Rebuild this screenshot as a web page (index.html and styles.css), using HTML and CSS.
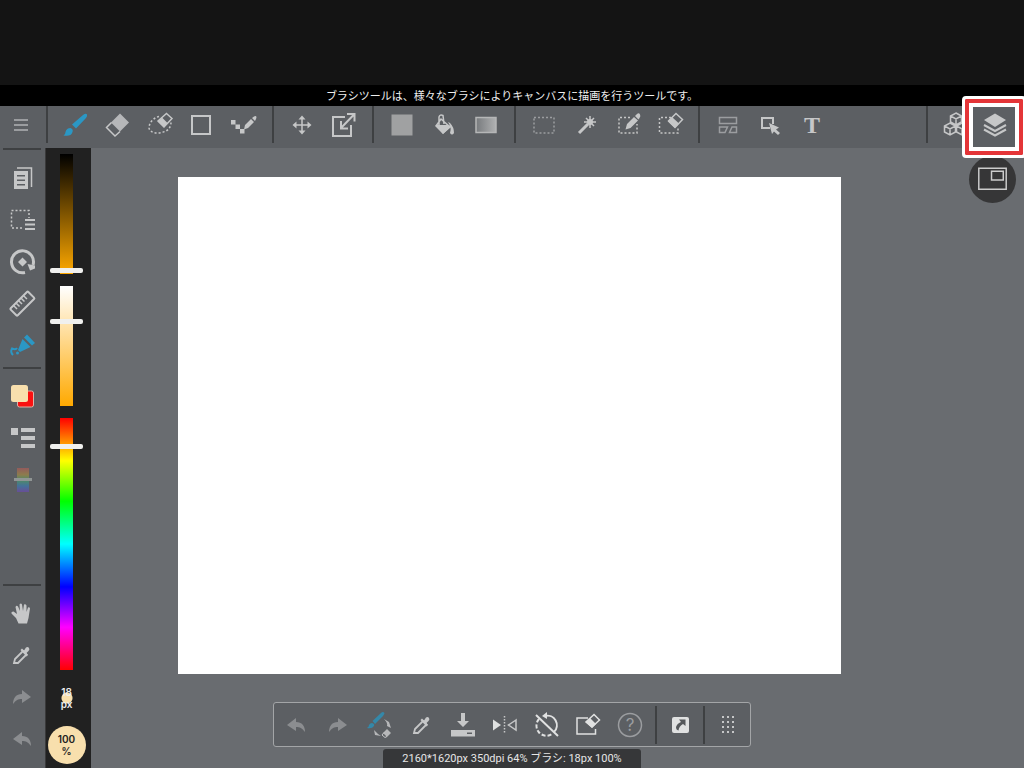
FILE: index.html
```html
<!DOCTYPE html>
<html lang="ja">
<head>
<meta charset="utf-8">
<meta name="viewport" content="width=device-width, initial-scale=1">
<title>ペイント</title>
<link rel="stylesheet" href="styles.css">
</head>
<body>
<svg class="defs" aria-hidden="true">
  <defs>
    <linearGradient id="grey" x1="0" x2="1"><stop offset="0" stop-color="#777a7d"/><stop offset="1" stop-color="#b0b1b2"/></linearGradient>
    <linearGradient id="spectrum" x1="0" x2="0" y1="0" y2="1"><stop offset="0" stop-color="#935b5c"/><stop offset=".28" stop-color="#8d7c4d"/><stop offset=".5" stop-color="#4f8b65"/><stop offset=".75" stop-color="#44719a"/><stop offset="1" stop-color="#684e96"/></linearGradient>
    <symbol id="undo" viewBox="-21 -21 42 42"><path fill="currentColor" d="M-9 0 0-7v4C6-3 9 1 9 7 6 3 4 2 0 2v4z"/></symbol>
    <symbol id="redo" viewBox="-21 -21 42 42"><path fill="currentColor" d="M9 0 0-7v4C-6-3-9 1-9 7-6 3-4 2 0 2v4z"/></symbol>
    <symbol id="dropper" viewBox="-21 -21 42 42"><path fill="none" stroke="currentColor" stroke-width="1.8" d="M-8 8l1-4L1-4l3.500 3.500-8.500 8.500z"/><path fill="currentColor" d="M-1.500-5 0-6.500 2-4.500 4-7.500Q6-8.500 7-7 8-5.500 6.500-4L4.500-2 6 0 4.500 1.500z"/></symbol>
  </defs>
</svg>
<div class="app">
  <div class="top-space"></div>
  <p class="notice">ブラシツールは、様々なブラシによりキャンバスに描画を行うツールです。</p>

  <header class="toolbar">
    <div class="menu">
      <button class="tool muted" aria-label="メニュー"><svg viewBox="-21 -21 42 42"><path class="line thick" d="M-7-5H7M-7 0H7M-7 5H7"/></svg></button>
    </div>
    <div class="group">
      <button class="tool active" aria-label="ブラシ"><svg viewBox="-21 -21 42 42"><path class="fill" d="M7-10Q10-12 11-10.500 11.500-9 10-7L0 3.500-4-.500zM-5.500 3Q-2.500 4-3.500 7-5 12-12.500 10.500-10.500 9.500-10.500 7-9.500 3-5.500 3z"/></svg></button>
      <button class="tool" aria-label="消しゴム"><svg viewBox="-21 -21 42 42"><path class="fill dim" d="M2-11.500 11-2.500 2 6.500-7-2.500z"/><path class="line" d="M-6.500-2.500-11.500 2.500-3 11 2 6.500"/></svg></button>
      <button class="tool" aria-label="投げ縄消しゴム"><svg viewBox="-21 -21 42 42"><path class="line dash" d="M-1-8.500C-7-7-11-2-11 3-10 9 0 9 6 6 10 4 11 0 11-3"/><path class="line" d="M6.500-11.500 12-6.500 4 2-2-4z"/><path class="fill" d="M2-7.500 7.500-2 4 2.500-2-3.500z"/></svg></button>
      <button class="tool" aria-label="図形"><svg viewBox="-21 -21 42 42"><rect class="line thick" x="-10" y="-9" width="18" height="18"/></svg></button>
      <button class="tool" aria-label="ドットツール"><svg viewBox="-21 -21 42 42"><path class="fill" d="M-13-5h4.500v4.500h-4.500zM-8.500-.500h4.500v4.500h-4.500zM-4 4h4.500v4.500h-4.500zM0 4.500L1 0 7-6 10-3 4 3zM8-7L10-8.500Q12-9.500 12.500-8 12.500-6.500 11-4z"/></svg></button>
    </div>
    <div class="group">
      <button class="tool" aria-label="移動"><svg viewBox="-21 -21 42 42"><path class="line" d="M0-7V7M-7 0H7"/><path class="fill" d="M0-9.500 3.500-5.500h-7zM0 9.500 3.500 5.500h-7zM-9.500 0-5.500-3.500v7zM9.500 0 5.500-3.500v7z"/></svg></button>
      <button class="tool" aria-label="変形"><svg viewBox="-21 -21 42 42"><path class="line thick" d="M1-8H-11V11H7V0M-3 3 10-10.500M3-11h7.500v7.500M-3-4v7.500h7"/></svg></button>
    </div>
    <div class="group">
      <button class="tool" aria-label="塗りつぶし図形"><svg viewBox="-21 -21 42 42"><rect fill="#a0a1a2" x="-10.500" y="-10.500" width="21" height="21"/></svg></button>
      <button class="tool" aria-label="バケツ"><svg viewBox="-21 -21 42 42"><path class="line" d="M-5 0V-8Q-4-11-1-9.500L0-1M-3-6 6 2-1 8-8 1z"/><path class="fill" d="M-8.500 0 5 0 6.500 2-1 9zM6-2Q10 2 10 8 8 11 6 8 8 3 4-3z"/></svg></button>
      <button class="tool" aria-label="グラデーション"><svg viewBox="-21 -21 42 42"><rect x="-10" y="-7.500" width="20" height="15" fill="url(#grey)" stroke="#b5b6b7" stroke-width="1.500"/></svg></button>
    </div>
    <div class="group">
      <button class="tool muted" aria-label="選択"><svg viewBox="-21 -21 42 42"><rect class="line dash" x="-10" y="-7.500" width="20" height="15.500"/></svg></button>
      <button class="tool" aria-label="自動選択"><svg viewBox="-21 -21 42 42"><path class="line heavy" d="M-7 8 2-1"/><path class="line" d="M4-9V3M-2-3H10M0-7 8 1M8-7 0 1"/><circle class="fill" cx="4" cy="-3" r="3"/></svg></button>
      <button class="tool" aria-label="選択ペン"><svg viewBox="-21 -21 42 42"><path class="line dash" d="M2-7.500H-9V8H9V-1"/><path class="fill" d="M-2.500 4.500-1-1 6-8 10-4.500 2.500 3zM7-9l2-2Q11-12.500 12-10.500 13-9 11.500-7L10.500-5.500z"/></svg></button>
      <button class="tool" aria-label="選択消し"><svg viewBox="-21 -21 42 42"><path class="line dash" d="M1-7.500H-10.500V8H8V2"/><path class="line" d="M6-11.500 12.500-5.500 5 2.500-1.500-4z"/><path class="fill" d="M2-8 9-1.500 5 3-2-3.500z"/></svg></button>
    </div>
    <div class="group">
      <button class="tool muted" aria-label="コマ割り"><svg viewBox="-21 -21 42 42"><path class="line" d="M-8.500-7.500H8.500V-1.500H-8.500zM-8.500 2H-.500L-3 7.500H-8.500zM4 2H8.500V7.500H1.500z"/></svg></button>
      <button class="tool" aria-label="操作"><svg viewBox="-21 -21 42 42"><path class="line thick" d="M0 3H-8V-7H3V-1"/><path class="fill" d="M-1-2 9 2.500 6 4.500 10 8 8 10 4 6.500 2 9z"/></svg></button>
      <button class="tool" aria-label="テキスト"><svg viewBox="-21 -21 42 42"><text class="letter" x="0" y="8" text-anchor="middle">T</text></svg></button>
    </div>
    <div class="group end">
      <button class="tool" aria-label="素材"><svg viewBox="-21 -21 42 42"><path class="line" d="M3-12 8.500-9V-3L3 0-2.500-3V-9zM-2.500-9 3-6 8.500-9M3-6V0M-3-2 2.500 1V7L-3 10-8.500 7V1zM-8.500 1-3 4 2.500 1M-3 4v6M9-2l5.500 3V7L9 10 3.500 7V1zM3.500 1 9 4l5.500-3M9 4v6"/></svg></button>
      <button class="tool picked" aria-label="レイヤー"><svg viewBox="-21 -21 42 42"><path class="fill" d="M0-11.500 11-5 0 2-11-5z"/><path class="line thick" d="M-11 0 0 6 11 0M-11 4.500 0 10.500 11 4.500"/></svg><span class="marker"></span></button>
    </div>
  </header>

  <div class="workspace">
    <nav class="sidebar">
      <div class="side-group first">
        <button class="tool" aria-label="ページ"><svg viewBox="-21 -21 42 42"><path class="fill" fill-rule="evenodd" d="M-8-7H6V11H-8zM-5-3V-1.500H3V-3zM-5 1.500V3H3V1.500zM-5 6V7.500H3V6z"/><path class="line" d="M-5-10H9.500V9"/></svg></button>
        <button class="tool" aria-label="選択メニュー"><svg viewBox="-21 -21 42 42"><path class="line dash" d="M0 8H-10.500V-9.500H7V-2"/><path class="line thick" d="M3 0H13M3 4.500H13M3 9H13"/></svg></button>
        <button class="tool" aria-label="回転"><svg viewBox="-21 -21 42 42"><path class="line heavy" d="M3 10.500A11 11 0 1 1 11 3"/><path class="fill" d="M5.500 2 13 3.500V6.500L8 8.500zM.500-4.500 5 0 .500 4.500-4 0z"/></svg></button>
        <button class="tool" aria-label="定規"><svg viewBox="-21 -21 42 42"><g transform="rotate(-45)"><rect class="line thick" x="-12" y="-5" width="25" height="10" rx="1"/><path class="line" d="M-7-5V0M-3.500-5V0M0-5V0M3.500-5V0M7-5V0"/></g></svg></button>
        <button class="tool active" aria-label="補正"><svg viewBox="-21 -21 42 42"><path class="fill" d="M2-8.500 5-11.500 13-3 10-.500zM.500-7 8.500 1-2 6-4 4z"/><path class="line thick" d="M-5 2Q-6 4-10 2.500-12 6-9 9"/><circle class="fill" cx="-4.500" cy="7" r="1.500"/></svg></button>
      </div>
      <div class="side-group">
        <button class="tool" aria-label="カラー"><svg viewBox="-21 -21 42 42"><rect x="-4.500" y="-5" width="16" height="16" rx="2" fill="#fa1010" stroke="#ddb3a8"/><rect x="-11" y="-11" width="17" height="17" rx="2.500" fill="#f8dfad"/></svg></button>
        <button class="tool" aria-label="リスト"><svg viewBox="-21 -21 42 42"><path class="fill" d="M-11-10h7v7h-7zM-1-10H13v4H-1zM-1-2H13v4H-1zM-1 6H13v4H-1z"/></svg></button>
        <button class="tool" aria-label="カラーバー"><svg viewBox="-21 -21 42 42"><rect x="-5" y="-12" width="12" height="24" fill="url(#spectrum)"/><rect x="-8" y="-2" width="18" height="3" fill="#909695"/></svg></button>
      </div>
      <div class="side-group bottom">
        <button class="tool" aria-label="手のひら"><svg viewBox="-21 -21 42 42"><path class="fill" d="M-6 5-10.500.500Q-11-1.500-8.500-1.500L-5 1-6.500-6Q-5.500-8-4-6.500L-2-2-2.500-8.500Q-1-10.500 0-8.500L1-2 2-8.500Q3.500-9.500 4.500-7.500L4.500-1 6-5.500Q7.500-6.500 8-4.500L6.500 5 5 10.500H-3.500z"/></svg></button>
        <button class="tool" aria-label="スポイト"><svg><use href="#dropper"/></svg></button>
        <button class="tool faint" aria-label="やり直し"><svg><use href="#redo"/></svg></button>
        <button class="tool faint" aria-label="取り消し"><svg><use href="#undo"/></svg></button>
      </div>
    </nav>
    <aside class="color-panel">
      <input class="slider value" type="range" min="0" max="1000" value="987" aria-label="明度">
      <input class="slider saturation" type="range" min="0" max="1000" value="287" aria-label="彩度">
      <input class="slider hue" type="range" min="0" max="1000" value="105" aria-label="色相">
      <button class="brush-size" aria-label="ブラシサイズ 18px"><span>18</span><span>px</span></button>
      <button class="opacity" aria-label="不透明度 100%"><span>100</span><span>%</span></button>
    </aside>
    <main class="stage">
      <div class="canvas"></div>
      <button class="preview" aria-label="プレビュー"><svg viewBox="-24 -24 48 48"><path class="line" d="M-14-11.500H14V10H-14zM-1-8.500H11V.500H-1z"/></svg></button>
    </main>
  </div>

  <footer class="bottom-area">
    <div class="dock">
      <button class="tool faint" aria-label="取り消し"><svg><use href="#undo"/></svg></button>
      <button class="tool faint" aria-label="やり直し"><svg><use href="#redo"/></svg></button>
      <button class="tool" aria-label="ブラシと消しゴムの切替"><svg viewBox="-21 -21 42 42"><path fill="#3488a9" d="M1-12Q3-14 4.500-12 4.500-11 3-9L-5-1-7.500-4zM-8-2Q-5-1-6 1-8 4-13 3-11 2-11 0-10-2-8-2z"/><path class="fill dim" d="M4-6 9-3 11 3 7 1Q8-2 4-6zM-6 5-2 9 1 11-5 10zM7 4 11 8 7 12 3 8z"/><path class="line thin" d="M4 7.500 2 10 5 12.500 7 11.500"/></svg></button>
      <button class="tool" aria-label="スポイト"><svg><use href="#dropper"/></svg></button>
      <button class="tool" aria-label="保存"><svg viewBox="-21 -21 42 42"><path class="fill" fill-rule="evenodd" d="M-3-12H1V-4H5L-1 2-7-4H-3zM-13 5H11V11.500H-13zM3 7.500V9H8V7.500z"/></svg></button>
      <button class="tool" aria-label="左右反転"><svg viewBox="-21 -21 42 42"><path class="fill bright" d="M-13-5.500-5 0-13 5.500z"/><path class="line" d="M10-5 2.500 0 10 5z"/><path class="line" stroke-dasharray="1.500 1.500" d="M-1.500-9V9"/></svg></button>
      <button class="tool bright" aria-label="回転リセット"><svg viewBox="-21 -21 42 42"><path class="line thick" d="M-3-9A9.500 9.500 0 0 1 6 7M-12-10 10 11"/><path class="line thick" stroke-dasharray="4 2" d="M-9-6A10 10 0 0 0 4 9"/><path class="fill" d="M-6-9-1-13V-6z"/></svg></button>
      <button class="tool bright" aria-label="クリア"><svg viewBox="-21 -21 42 42"><path class="line" d="M-2-7H-13V9H5.500V4"/><path class="line" d="M4-10.500 9.500-5 2 2-4-3z"/><path class="fill" d="M0-7 6-1 2 3-4.500-3z"/></svg></button>
      <button class="tool muted" aria-label="ヘルプ"><svg viewBox="-21 -21 42 42"><circle class="line" cx="-2" r="11.500"/><text class="question" x="-2" y="6" text-anchor="middle">?</text></svg></button>
      <span class="divider"></span>
      <button class="tool bright" aria-label="ショートカット"><svg viewBox="-21 -21 42 42"><rect class="fill" x="-8" y="-8" width="17" height="16" rx="2"/><path fill="#55585b" d="M-1-5.500H5.500V1L3-1Q-1 1-1.500 5.500-4 5-4 2-3-1.500 1-3z"/></svg></button>
      <span class="divider"></span>
      <button class="tool" aria-label="ドックを移動"><svg viewBox="-21 -21 42 42"><path class="line dots" d="M-5-9V8M0-9V8M5-9V8"/></svg></button>
    </div>
    <div class="status">2160*1620px 350dpi 64% ブラシ: 18px 100%</div>
  </footer>
</div>
</body>
</html>
```
FILE: styles.css
```css
* { box-sizing: border-box; }

body {
  margin: 0;
  background: #696c70;
  font-family: Inter, "Noto Sans CJK JP", sans-serif;
}

button {
  padding: 0;
  border: 0;
  background: none;
  color: inherit;
  font: inherit;
  cursor: pointer;
}

.defs { position: absolute; width: 0; height: 0; }

.app {
  position: relative;
  display: flex;
  flex-direction: column;
  min-height: 100vh;
  overflow: hidden;
}

.top-space { height: 85px; background: #141414; }

.notice {
  margin: 0;
  background: #000;
  color: #eee;
  font-family: "Noto Sans CJK JP", sans-serif;
  font-size: 11px;
  line-height: 21px;
  text-align: center;
}

/* Icons */
.tool {
  display: flex;
  flex: none;
  align-items: center;
  justify-content: center;
  width: 42px;
  height: 42px;
  color: #c6c7c8;
}
.tool svg { flex: none; width: 42px; height: 42px; }
.active { color: #2b97c4; }
.muted { color: #9b9da0; }
.faint { color: #8b8d90; }
.tool.bright, .fill.bright { color: #e0e1e1; }
.fill { fill: currentColor; }
.dim { opacity: .85; }
.line { fill: none; stroke: currentColor; stroke-width: 1.5; }
.thin { stroke-width: 1; }
.thick { stroke-width: 2; }
.heavy { stroke-width: 3; }
.dash { stroke-dasharray: 2 2; }
.dots { stroke-width: 2; stroke-dasharray: 2 3; }
.letter { fill: currentColor; font: bold 24px "Liberation Serif", serif; }
.question { fill: currentColor; font: 17px Inter, sans-serif; }

/* Top toolbar */
.toolbar {
  display: flex;
  align-items: flex-start;
  height: 42px;
  background: #5c5f63;
}
.toolbar .tool { height: 38px; }
.menu { width: 46px; }
.group {
  display: flex;
  height: 37px;
  padding: 0 7px;
  border-left: 2px solid #3e4042;
}
.group.end { margin-left: auto; padding: 0 8px 0 4px; }
.picked { position: relative; }
.marker {
  position: absolute;
  top: -10px;
  left: -12px;
  z-index: 2;
  width: 64px;
  height: 62px;
  border: 3px solid #fff;
  border-radius: 4px;
  box-shadow: inset 0 0 0 4px #e43538, inset 0 0 0 8px #fff;
}

/* Workspace */
.workspace { display: flex; flex: 1; }
.sidebar {
  display: flex;
  flex-direction: column;
  width: 45px;
  padding: 0 4px 8px 3px;
  background: #5c5f63;
}
.side-group {
  display: flex;
  flex-direction: column;
  align-items: center;
  padding-top: 6px;
  border-top: 2px solid #3e4042;
}
.side-group.first { padding-top: 7px; }
.side-group.bottom { margin-top: auto; }

.color-panel {
  display: flex;
  flex-direction: column;
  align-items: center;
  gap: 12px;
  width: 46px;
  padding: 6px 4px 4px 0;
  border-left: 1px solid #3a3a3b;
  background: #212121;
}
.slider {
  writing-mode: vertical-lr;
  appearance: none;
  width: 33px;
  height: 120px;
  margin: 0;
  background: center / 13px 100% no-repeat;
}
.slider::-webkit-slider-runnable-track { width: 33px; height: 100%; }
.slider::-webkit-slider-thumb {
  appearance: none;
  width: 33px;
  height: 5px;
  border-radius: 2px;
  background: #f0f0ee;
}
.value { background-image: linear-gradient(#000, #ffa900); }
.saturation { background-image: linear-gradient(#fff, #ffa900); }
.hue {
  height: 252px;
  background-image: linear-gradient(#f00, #ff0 17%, #0f0 33%, #0ff 50%, #00f 67%, #f0f 83%, #f00);
}
.brush-size, .opacity {
  display: flex;
  flex-direction: column;
  align-items: center;
  justify-content: center;
  font-size: 10px;
  font-weight: 600;
  line-height: 12px;
}
.brush-size {
  width: 38px;
  height: 32px;
  background: radial-gradient(circle, #f8dfad 5px, transparent 6px);
  color: #eee;
}
.opacity {
  flex: none;
  width: 38px;
  height: 38px;
  margin-top: auto;
  border-radius: 50%;
  background: #f8dfad;
  color: #222;
}

.stage {
  position: relative;
  flex: 1;
  padding: 29px 183px 0 87px;
}
.canvas { aspect-ratio: 4 / 3; background: #fff; }
.preview {
  position: absolute;
  top: 8px;
  right: 8px;
  width: 47px;
  height: 47px;
  border-radius: 50%;
  background: #363637;
  color: #ccc;
}
.preview svg { display: block; width: 47px; height: 47px; }

/* Floating dock and status line over the workspace */
.bottom-area {
  position: absolute;
  right: 0;
  bottom: 0;
  left: 0;
  display: flex;
  flex-direction: column;
  align-items: center;
  gap: 2px;
  pointer-events: none;
}
.dock {
  display: flex;
  align-items: center;
  height: 45px;
  padding: 0 1px;
  border: 1px solid #a3a5a7;
  border-radius: 3px;
  background: #5c5f63;
  pointer-events: auto;
}
.divider { width: 2px; height: 38px; margin: 0 2px; background: #3e4042; }
.status {
  padding: 0 19px;
  border-radius: 3px 3px 0 0;
  background: #363739;
  color: #e6e6e6;
  font-family: Roboto, "Noto Sans CJK JP", sans-serif;
  font-size: 11px;
  line-height: 19px;
}
```
